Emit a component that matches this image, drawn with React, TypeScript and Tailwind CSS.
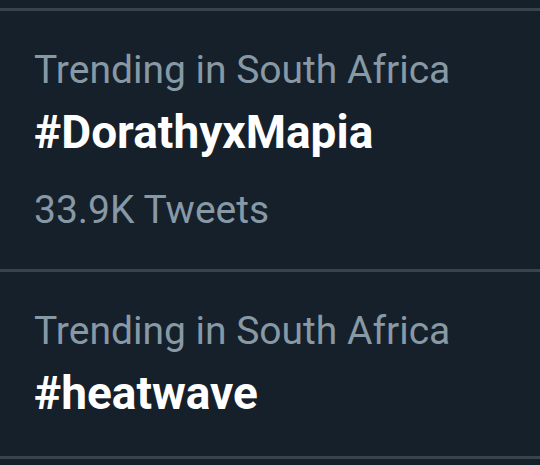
export default function App() {
  const trends = [
    { place: 'Trending in South Africa', tag: '#DorathyxMapia', count: '33.9K Tweets' },
    { place: 'Trending in South Africa', tag: '#heatwave' },
  ];

  return (
    <div className="w-[540px] h-[465px] overflow-hidden bg-[#15202b] pt-2 font-['Roboto',sans-serif]">
      <div className="border-t-[3px] border-[#38444d]">
        {trends.map((t, i) => (
          <div key={i} className="border-b-[3px] border-[#38444d] px-[34px] pt-[35px] pb-[35px]">
            <p className="text-[39px] leading-[48px] text-[#8899a6]">{t.place}</p>
            <p className="mt-[10px] text-[46px] leading-[56px] font-bold text-white">{t.tag}</p>
            {t.count && (
              <p className="mt-[26px] text-[39px] leading-[48px] text-[#8899a6]">{t.count}</p>
            )}
          </div>
        ))}
      </div>
    </div>
  );
}
